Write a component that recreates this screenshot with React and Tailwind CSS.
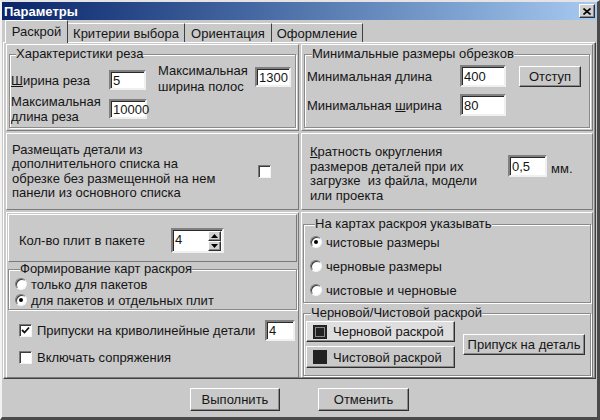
import React from 'react';

// classic win32 look: raised panels, etched group boxes, sunken edits
const raised = 'border border-t-white border-l-white border-r-[#7a7a7a] border-b-[#7a7a7a]';

function Edit({ value, className = '' }) {
  return (
    <div className={`bg-white border-2 border-t-[#808080] border-l-[#808080] border-r-[#f0f0f0] border-b-[#f0f0f0] shadow-[inset_1px_1px_0_#2a2a2a] flex items-center pl-[2px] shrink-0 ${className}`}>
      {value}
    </div>
  );
}

function Btn({ children, className = '' }) {
  return (
    <div className={`flex items-center justify-center shrink-0 border border-t-white border-l-white border-r-[#303030] border-b-[#303030] shadow-[inset_-1px_-1px_0_#8a8a8a] ${className}`}>
      {children}
    </div>
  );
}

function Group({ title, className = '', children }) {
  return (
    <fieldset className={`border border-[#8a8a8a] shadow-[inset_1px_1px_0_#fff,1px_1px_0_#fff] min-w-0 ${className}`}>
      <legend className="ml-[5px] px-0 bg-[#c9c9c9] leading-[14px]">{title}</legend>
      {children}
    </fieldset>
  );
}

function Radio({ checked, label }) {
  return (
    <div className="flex items-center h-[16px]">
      <span className="w-[12px] h-[12px] rounded-full bg-white border border-t-[#7a7a7a] border-l-[#7a7a7a] border-r-[#f4f4f4] border-b-[#f4f4f4] shadow-[inset_1px_1px_0_#3a3a3a] flex items-center justify-center shrink-0">
        {checked && <span className="w-[4px] h-[4px] rounded-full bg-black" />}
      </span>
      <span className="ml-[4px] whitespace-nowrap">{label}</span>
    </div>
  );
}

function Check({ checked }) {
  return (
    <span className="w-[13px] h-[13px] bg-white border border-t-[#7a7a7a] border-l-[#7a7a7a] border-r-[#f4f4f4] border-b-[#f4f4f4] shadow-[inset_1px_1px_0_#3a3a3a] flex items-center justify-center shrink-0">
      {checked && (
        <svg width="9" height="9" viewBox="0 0 9 9">
          <path d="M1 4 L3.5 6.5 L8 1.5" stroke="#111" strokeWidth="1.8" fill="none" />
        </svg>
      )}
    </span>
  );
}

const App = () => {
  return (
    <div className="w-[600px] h-[420px] bg-[#c9c9c9] flex flex-col border-t-2 border-l-2 border-t-[#e4e4e4] border-l-[#f2f2f2] border-r-[3px] border-b-[3px] border-r-[#4a4a4a] border-b-[#4a4a4a] font-['Liberation_Sans',Arial,sans-serif] text-[13px] text-[#151515] leading-[15px] overflow-hidden">
      {/* Title bar */}
      <div className="h-[18px] flex items-center justify-between bg-gradient-to-r from-[#0a246a] to-[#a6caf0] pl-[2px] pr-[2px] shrink-0">
        <span className="text-white font-bold text-[13px]">Параметры</span>
        <Btn className="w-[16px] h-[14px] bg-[#d0d0d0]">
          <svg width="8" height="7" viewBox="0 0 8 7">
            <path d="M0.5 0.5 L7.5 6.5 M7.5 0.5 L0.5 6.5" stroke="#000" strokeWidth="1.6" />
          </svg>
        </Btn>
      </div>

      <div className="flex-1 flex flex-col px-[1px]">
        {/* Tabs */}
        <div className="h-[22px] flex items-end pl-[2px] shrink-0">
          <div className="relative z-10 -mb-px h-[23px] w-[63px] bg-[#c9c9c9] border-t border-l border-r border-t-white border-l-white border-r-[#404040] flex items-center justify-center pb-[2px]">
            Раскрой
          </div>
          <div className="h-[19px] w-[117px] border-t border-r border-t-white border-r-[#404040] flex items-center justify-center">
            Критерии выбора
          </div>
          <div className="h-[19px] w-[87px] border-t border-r border-t-white border-r-[#404040] flex items-center justify-center">
            Ориентация
          </div>
          <div className="h-[19px] w-[91px] border-t border-r border-t-white border-r-[#404040] flex items-center justify-center">
            Оформление
          </div>
        </div>

        {/* Tab page */}
        <div className="h-[337px] border border-t-white border-l-white border-r-[#404040] border-b-[#404040] shadow-[inset_-1px_-1px_0_#8a8a8a] px-[2px] pt-[1px] flex flex-col gap-[2px] shrink-0">
          {/* Row 1 */}
          <div className="h-[87px] flex gap-[2px] shrink-0">
            <div className={`w-[293px] ${raised} px-[2px] pt-[2px] pb-[2px] flex`}>
              <Group title="Характеристики реза" className="flex-1 px-[1px] flex">
                <div className="flex w-full">
                  <div className="w-[140px] flex flex-col">
                    <div className="mt-[9px] h-[20px] flex items-center">
                      <span className="w-[98px]"><u>Ш</u>ирина реза</span>
                      <Edit value="5" className="w-[37px] h-[20px]" />
                    </div>
                    <div className="mt-[4px] flex items-center">
                      <span className="w-[98px] leading-[15px]">Максимальная<br />длина реза</span>
                      <Edit value="10000" className="w-[38px] h-[20px]" />
                    </div>
                  </div>
                  <div className="ml-[7px] mt-[2px] flex items-start">
                    <span className="w-[97px] leading-[16px] whitespace-nowrap">Максимальная<br />ширина полос</span>
                    <Edit value="1300" className="mt-[4px] w-[36px] h-[20px]" />
                  </div>
                </div>
              </Group>
            </div>
            <div className={`flex-1 ${raised} px-[2px] pt-[2px] pb-[2px] flex`}>
              <Group title="Минимальные размеры обрезков" className="flex-1 px-[2px]">
                <div className="mt-[4px] flex items-center">
                  <span className="w-[153px]">Минимальная длина</span>
                  <Edit value="400" className="w-[46px] h-[22px]" />
                  <Btn className="ml-[13px] w-[62px] h-[21px]">Отступ</Btn>
                </div>
                <div className="mt-[7px] flex items-center">
                  <span className="w-[153px]">Минимальная <u>ш</u>ирина</span>
                  <Edit value="80" className="w-[46px] h-[22px]" />
                </div>
              </Group>
            </div>
          </div>

          {/* Row 2 */}
          <div className="h-[77px] flex gap-[2px] shrink-0">
            <div className={`w-[293px] ${raised} pl-[5px] flex items-center`}>
              <span className="w-[246px] leading-[14.5px] whitespace-nowrap">
                Размещать детали из<br />
                дополнительного списка на<br />
                обрезке без размещенной на нем<br />
                панели из основного списка
              </span>
              <Check />
            </div>
            <div className={`flex-1 ${raised} pl-[8px] pt-[11px] flex items-start`}>
              <span className="w-[198px] leading-[14.7px] whitespace-nowrap">
                <u>К</u>ратность округления<br />
                размеров деталей при их<br />
                загрузке&nbsp; из файла, модели<br />
                или проекта
              </span>
              <Edit value="0,5" className="mt-[10px] w-[39px] h-[22px]" />
              <span className="ml-[4px] mt-[16px]">мм.</span>
            </div>
          </div>

          {/* Row 3 */}
          <div className="flex-1 flex gap-[2px]">
            <div className={`w-[293px] ${raised} p-[1px] flex flex-col`}>
              <div className={`h-[48px] ${raised} pl-[10px] pt-[4px] flex items-center shrink-0`}>
                <span className="w-[152px]">Кол-во плит в пакете</span>
                <div className="w-[53px] h-[25px] bg-white border-2 border-t-[#808080] border-l-[#808080] border-r-[#f0f0f0] border-b-[#f0f0f0] shadow-[inset_1px_1px_0_#2a2a2a] flex items-stretch">
                  <span className="flex-1 pl-[2px] pt-[2px]">4</span>
                  <div className="w-[13px] flex flex-col py-[1px] mr-[1px]">
                    <Btn className="h-[10px] bg-[#d2d2d2]">
                      <svg width="7" height="4" viewBox="0 0 7 4"><path d="M3.5 0 L7 4 L0 4 Z" fill="#000" /></svg>
                    </Btn>
                    <Btn className="h-[10px] bg-[#d2d2d2]">
                      <svg width="7" height="4" viewBox="0 0 7 4"><path d="M0 0 L7 0 L3.5 4 Z" fill="#000" /></svg>
                    </Btn>
                  </div>
                </div>
              </div>
              <Group title="Формирование карт раскроя" className="h-[48px] px-[6px] shrink-0">
                <div className="flex flex-col mt-[0px]">
                  <Radio label="только для пакетов" />
                  <Radio checked label="для пакетов и отдельных плит" />
                </div>
              </Group>
              <div className="flex-1 pl-[11px] pr-[2px] flex flex-col">
                <div className="mt-[10px] h-[21px] flex items-center">
                  <Check checked />
                  <span className="ml-[5px] whitespace-nowrap">Припуски на криволинейные детали</span>
                  <Edit value="4" className="ml-auto w-[30px] h-[21px]" />
                </div>
                <div className="mt-[8px] h-[16px] flex items-center">
                  <Check />
                  <span className="ml-[5px]">Включать сопряжения</span>
                </div>
              </div>
            </div>
            <div className={`flex-1 ${raised} px-[1px] pt-[4px] pb-[1px] flex flex-col`}>
              <Group title="На картах раскроя указывать" className="h-[86px] px-[6px] shrink-0">
                <div className="flex flex-col gap-[8px] mt-[3px]">
                  <Radio checked label="чистовые размеры" />
                  <Radio label="черновые размеры" />
                  <Radio label="чистовые и черновые" />
                </div>
              </Group>
              <Group title="Черновой/Чистовой раскрой" className="mt-[3px] flex-1 px-[2px]">
                <div className="flex items-center mt-[1px]">
                  <div className="flex flex-col gap-[4px]">
                    <Btn className="w-[149px] h-[21px] bg-[#dedede] justify-start pl-[6px]">
                      <span className="w-[14px] h-[14px] bg-[#222] border-2 border-[#222] shadow-[inset_0_0_0_1px_#8a8a8a] mr-[6px]" />
                      Черновой раскрой
                    </Btn>
                    <Btn className="w-[149px] h-[22px] justify-start pl-[6px]">
                      <span className="w-[14px] h-[14px] bg-[#222] mr-[6px]" />
                      Чистовой раскрой
                    </Btn>
                  </div>
                  <Btn className="ml-[8px] w-[122px] h-[21px]">Припуск на деталь</Btn>
                </div>
              </Group>
            </div>
          </div>
        </div>

        {/* Bottom buttons */}
        <div className="flex-1 flex justify-center items-start gap-[38px] pt-[9px]">
          <Btn className="w-[90px] h-[23px]">Выполнить</Btn>
          <Btn className="w-[91px] h-[23px]">Отменить</Btn>
        </div>
      </div>
    </div>
  );
};

export default App;
